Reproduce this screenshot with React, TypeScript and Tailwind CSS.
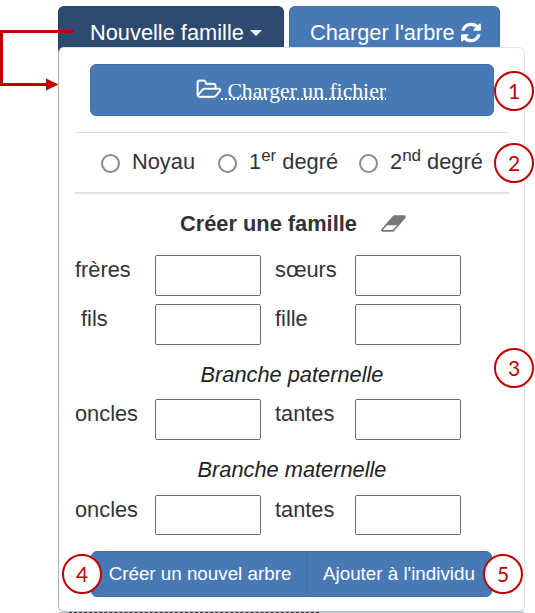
import type { ReactNode } from "react";

function Folder() {
  return (
    <svg className="mb-px h-[23px] w-[26px] shrink-0" viewBox="0 0 2048 1792" fill="currentColor" stroke="currentColor" strokeWidth="30">
      <path d="M1845 931q0-35-53-35h-1088q-40 0-85.5 21.5t-71.5 52.5l-294 363q-18 24-18 40 0 35 53 35h1088q40 0 86-22t71-53l294-363q18-22 18-39zm-1141-163h768v-160q0-40-28-68t-68-28h-576q-40 0-68-28t-28-68v-64q0-40-28-68t-68-28h-320q-40 0-68 28t-28 68v853l256-315q44-53 116-87.5t140-34.5zm1269 163q0 62-46 120l-295 363q-43 53-116 87.5t-140 34.5h-1088q-92 0-158-66t-66-158v-960q0-92 66-158t158-66h320q92 0 158 66t66 158v32h544q92 0 158 66t66 158v160h192q54 0 99 24.5t67 70.5q15 32 15 68z" />
    </svg>
  );
}

function Refresh() {
  return (
    <svg className="-mt-0.5 h-[23px] w-5 shrink-0" viewBox="0 0 1536 1792" fill="currentColor">
      <path d="M1511 1056q0 5-1 7-64 268-268 434.5t-478 166.5q-146 0-282.5-55t-243.5-157l-129 129q-19 19-45 19t-45-19-19-45v-448q0-26 19-45t45-19h448q26 0 45 19t19 45-19 45l-137 137q71 66 161 102t187 36q134 0 250-65t186-179q11-17 53-117 8-23 30-23h192q13 0 22.5 9.5t9.5 22.5zm25-800v448q0 26-19 45t-45 19h-448q-26 0-45-19t-19-45 19-45l138-138q-148-137-349-137-134 0-250 65t-186 179q-11 17-53 117-8 23-30 23h-199q-13 0-22.5-9.5t-9.5-22.5v-7q65-268 270-434.5t480-166.5q146 0 284 55.5t245 156.5l130-129q19-19 45-19t45 19 19 45z" />
    </svg>
  );
}

function Eraser() {
  return (
    <svg className="-mt-0.5 h-[23px] w-[25px] shrink-0 text-[#777]" viewBox="0 0 1920 1792" fill="currentColor">
      <path d="M896 1408l336-384H464l-336 384h768zm1013-1077q15 34 9.5 71.5t-30.5 65.5l-896 1024q-38 44-96 44H128q-38 0-69.5-20.5T11 1461q-15-34-9.5-71.5T32 1324L928 300q38-44 96-44h768q38 0 69.5 20.5T1909 331z" />
    </svg>
  );
}

function Choice({ children, className }: { children: ReactNode; className: string }) {
  return (
    <label className={`flex items-center ${className}`}>
      <input type="radio" name="degre" className="mt-0.5 mr-[12px] size-[19px] shrink-0 appearance-none rounded-full border-2 border-[#8c8c8c] bg-white" />
      <span className="whitespace-nowrap">{children}</span>
    </label>
  );
}

function Field({ label, indent = "", height = "h-[41px]" }: { label: string; indent?: string; height?: string }) {
  return (
    <label className="flex w-[200px]">
      <span className={`w-20 shrink-0 pt-[2px] leading-[26px] ${indent}`}>{label}</span>
      <input className={`w-[106px] rounded-[2px] border border-[#6b6b6b] bg-white ${height}`} />
    </label>
  );
}

function Callout({ n, className }: { n: number; className: string }) {
  return (
    <div className={`absolute flex size-10 items-center justify-center rounded-full border-2 border-[#c00000] bg-white pb-0.5 font-[Lato,sans-serif] text-[21px] leading-none text-[#c00000] ${className}`}>
      {n}
    </div>
  );
}

export default function App() {
  return (
    <div className="relative h-[613px] w-[535px] overflow-hidden bg-white pl-[58px] font-['Liberation_Sans',Arial,sans-serif] text-[21.8px] text-[#333]">
      <div className="flex h-[47px] gap-[5px] pt-1.5 text-white">
        <button className="flex h-[47px] w-[226px] items-center rounded-t-[6px] border border-b-0 border-[#204060] bg-[#2d4b70] pt-[6px] pl-[31px]">
          <span className="whitespace-nowrap leading-[26px]">Nouvelle famille</span>
          <span className="ml-[6px] border-x-[6px] border-t-[6px] border-x-transparent border-t-white" />
        </button>
        <button className="flex h-[41px] w-[211px] items-center rounded-t-[6px] border border-b-0 border-[#3e70a8] bg-[#4879b5] pt-[12px] pl-5">
          <span className="mr-[6px] whitespace-nowrap leading-[26px]">Charger l'arbre</span>
          <Refresh />
        </button>
      </div>

      <div className="relative h-[565px] w-[467px] rounded-[6px] border border-[#dde3ea] border-b-[#b9bdc6] border-l-[#b0b0b0] bg-white pt-4 pl-4">
        <button className="ml-[15px] flex h-[52px] w-[404px] items-center justify-center rounded-[6px] border border-[#3e70a8] bg-[#4879b5] pr-[2px] text-white">
          <Folder />
          <span className="pt-0.5 font-['Liberation_Serif',serif] text-[21.7px] whitespace-pre underline decoration-dotted decoration-2 underline-offset-1"> Charger un fichier</span>
        </button>

        <div className="mt-[16px] flex h-[62px] w-[434px] border-t border-b-2 border-[#e0e0e0] pl-[26px]">
          <Choice className="w-[117px]">Noyau</Choice>
          <Choice className="w-[141px]">1<sup className="text-[17px]">er</sup> degré</Choice>
          <Choice className="w-[140px]">2<sup className="text-[17px]">nd</sup> degré</Choice>
        </div>

        <div className="mt-4 flex h-[28px] w-[434px] items-center pl-[105px]">
          <h3 className="mr-[24px] font-bold whitespace-nowrap">Créer une famille</h3>
          <Eraser />
        </div>

        <div className="mt-[17px] grid grid-cols-[200px_200px] gap-y-2">
          <Field label="frères" />
          <Field label="sœurs" />
          <Field label="fils" indent="pl-1.5" />
          <Field label="fille" />
        </div>

        <h4 className="mt-[17px] w-[434px] text-center leading-[26px] text-[#222] italic">Branche paternelle</h4>
        <div className="mt-[11px] flex">
          <Field label="oncles" />
          <Field label="tantes" />
        </div>

        <h4 className="mt-[17px] w-[434px] text-center leading-[26px] text-[#222] italic">Branche maternelle</h4>
        <div className="mt-[12px] flex">
          <Field label="oncles" height="h-10" />
          <Field label="tantes" height="h-10" />
        </div>

        <div className="mt-4 ml-4 flex h-[46px] w-[401px] overflow-hidden rounded-[6px] border border-[#3e70a8] bg-[#4879b5] text-[18.8px] text-white">
          <button className="w-[215px] border-r border-[#3e70a8] pl-[2px] whitespace-nowrap">Créer un nouvel arbre</button>
          <button className="pl-4 whitespace-nowrap">Ajouter à l'individu</button>
        </div>
      </div>

      <div className="h-px w-[467px] bg-[#c3c7cf]">
        <div className="ml-[11px] h-px w-[250px] border-t border-dashed border-[#333]" />
      </div>

      <svg className="absolute top-0 left-0" width="80" height="100" viewBox="0 0 80 100">
        <path d="M74 31.5H1.5V84.5H48" fill="none" stroke="#c00000" strokeWidth="3" />
        <path d="M46 78.5L58.5 84.5L46 90.5z" fill="#c00000" />
      </svg>

      <Callout n={1} className="top-[71px] left-[494px]" />
      <Callout n={2} className="top-[143px] left-[494px]" />
      <Callout n={3} className="top-[348px] left-[494px]" />
      <Callout n={4} className="top-[554px] left-[62px]" />
      <Callout n={5} className="top-[554px] left-[483px]" />
    </div>
  );
}
